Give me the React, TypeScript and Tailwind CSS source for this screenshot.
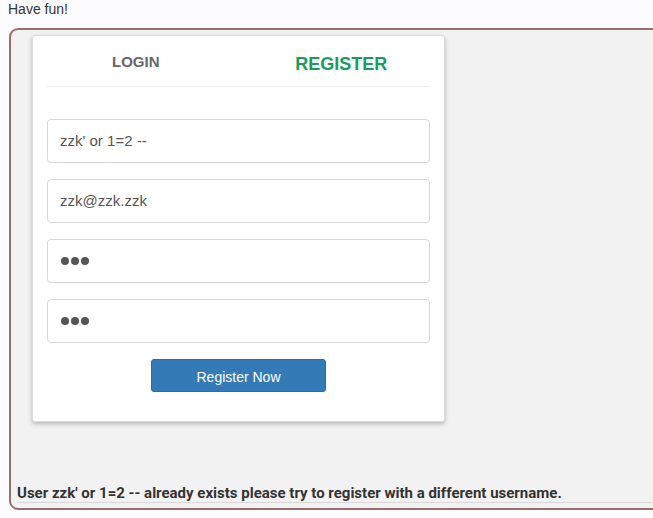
export default function App() {
  return (
    <div className="w-[653px] h-[518px] overflow-hidden bg-[#fcfcff] font-['Liberation_Sans',sans-serif]">
      <p className="pl-[8px] pt-[1px] text-[14px] leading-[17px] text-[#333]">Have fun!</p>
      <div className="ml-[9px] mt-[10px] w-[700px] h-[482px] rounded-[9px] border-2 border-[#9a6e6c] bg-[#f2f2f2] flex flex-col">
        {/* Register card */}
        <div className="ml-[21px] mt-[5px] w-[413px] h-[387px] rounded-[3px] border border-[#dcdcdc] bg-white shadow-[0_2px_4px_rgba(0,0,0,0.25)] flex flex-col">
          <div className="flex h-[50px] items-end">
            <div className="w-1/2 pb-[13px] text-center text-[15px] font-bold text-[#666]">LOGIN</div>
            <div className="w-1/2 pb-[8px] text-center text-[18px] font-bold text-[#1a9c5a]">REGISTER</div>
          </div>
          <div className="mx-[14px] border-b border-[#eeeeee]" />
          <div className="mx-[14px] mt-[32px] flex flex-col gap-[16px]">
            <div className="h-[44px] rounded-[4px] border border-[#d8d8d8] flex items-center pl-[12px] text-[15px] text-[#555]">zzk' or 1=2 --</div>
            <div className="h-[44px] rounded-[4px] border border-[#d8d8d8] flex items-center pl-[12px] text-[15px] text-[#555]">zzk@zzk.zzk</div>
            <div className="h-[44px] rounded-[4px] border border-[#d8d8d8] flex items-center pl-[13px] gap-[2px]">
              <span className="w-[8px] h-[8px] rounded-full bg-[#555]" />
              <span className="w-[8px] h-[8px] rounded-full bg-[#555]" />
              <span className="w-[8px] h-[8px] rounded-full bg-[#555]" />
            </div>
            <div className="h-[44px] rounded-[4px] border border-[#d8d8d8] flex items-center pl-[13px] gap-[2px]">
              <span className="w-[8px] h-[8px] rounded-full bg-[#555]" />
              <span className="w-[8px] h-[8px] rounded-full bg-[#555]" />
              <span className="w-[8px] h-[8px] rounded-full bg-[#555]" />
            </div>
          </div>
          <div className="mt-[16px] flex justify-center">
            <button className="w-[175px] h-[33px] rounded-[3px] border border-[#2e6da4] bg-[#337ab7] pt-[3px] text-[14px] text-white">Register Now</button>
          </div>
        </div>
        <div className="mt-auto ml-[6px] border-b border-[#d8d8d8] pt-[2px] text-[15px] font-bold leading-[18px] text-[#333] font-['Roboto',sans-serif]">
          User zzk' or 1=2 -- already exists please try to register with a different username.
        </div>
        <div className="h-[5px]" />
      </div>
    </div>
  );
}
